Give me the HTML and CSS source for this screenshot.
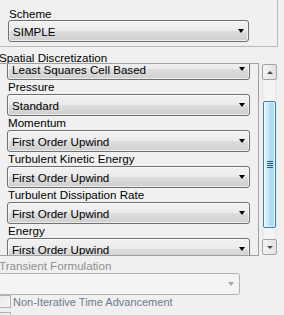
FILE: index.html
```html
<!DOCTYPE html>
<html>
<head>
<meta charset="utf-8">
<link rel="stylesheet" href="styles.css">
</head>
<body>
<div class="panel">
  <div class="group">
    <div class="label">Scheme</div>
    <div class="combo combo-scheme"><span class="value">SIMPLE</span><span class="arrow"></span></div>
  </div>

  <div class="section-title">Spatial Discretization</div>

  <div class="scroll-row">
    <div class="frame">
      <div class="content">
        <div class="combo combo-first"><span class="value">Least Squares Cell Based</span><span class="arrow"></span></div>
        <div class="label">Pressure</div>
        <div class="combo"><span class="value">Standard</span><span class="arrow"></span></div>
        <div class="label">Momentum</div>
        <div class="combo"><span class="value">First Order Upwind</span><span class="arrow"></span></div>
        <div class="label">Turbulent Kinetic Energy</div>
        <div class="combo"><span class="value">First Order Upwind</span><span class="arrow"></span></div>
        <div class="label">Turbulent Dissipation Rate</div>
        <div class="combo"><span class="value">First Order Upwind</span><span class="arrow"></span></div>
        <div class="label">Energy</div>
        <div class="combo"><span class="value">First Order Upwind</span><span class="arrow"></span></div>
      </div>
    </div>
    <div class="scrollbar">
      <div class="sb-btn"><span class="sb-up"></span></div>
      <div class="sb-track">
        <div class="thumb"><div class="grip"><i></i><i></i><i></i><i></i></div></div>
      </div>
      <div class="sb-btn"><span class="sb-down"></span></div>
    </div>
  </div>

  <div class="label label-disabled">Transient Formulation</div>
  <div class="combo-disabled"><span class="arrow arrow-disabled"></span></div>

  <div class="check"><span class="box"></span><span class="check-text">Non-Iterative Time Advancement</span></div>
  <div class="check"><span class="box"></span><span class="check-text">Frozen Flux Formulation</span></div>
</div>
</body>
</html>
```

FILE: styles.css
```css
html, body {
  margin: 0;
  padding: 0;
  width: 284px;
  height: 315px;
  overflow: hidden;
  background: #f0f0f0;
}

.panel {
  margin-left: -8px;
  width: 286px;
  font-family: "Liberation Sans", Arial, sans-serif;
  font-size: 11.6px;
  color: #000;
}

.group {
  margin-top: -10px;
  border: 1px solid #b9b9b9;
  padding: 16px 0 4px 15px;
}

.label {
  height: 14px;
  line-height: 14px;
  padding-left: 1px;
  white-space: nowrap;
}

.group .label {
  height: 13px;
  line-height: 13px;
}

.combo {
  position: relative;
  box-sizing: border-box;
  width: 243px;
  height: 22px;
  border: 1px solid #707070;
  border-radius: 3px;
  background: linear-gradient(to bottom, #f2f2f2 0%, #ebebeb 48%, #dddddd 52%, #cfcfcf 100%);
  box-shadow: inset 0 0 0 1px rgba(255,255,255,0.6);
  display: flex;
  align-items: center;
  padding-left: 4px;
  white-space: nowrap;
}

.combo-scheme {
  width: 241px;
}

.arrow {
  position: absolute;
  right: 4px;
  top: 50%;
  margin-top: -2px;
  width: 0;
  height: 0;
  border-left: 3.5px solid transparent;
  border-right: 3.5px solid transparent;
  border-top: 4px solid #000;
}

.section-title {
  padding-top: 4px;
  height: 12px;
  line-height: 13px;
  padding-left: 7px;
  white-space: nowrap;
}

.scroll-row {
  display: flex;
  align-items: stretch;
}

.frame {
  box-sizing: border-box;
  width: 267px;
  height: 193px;
  border: 1px solid #a0a0a0;
  overflow: hidden;
}

.content {
  margin-top: -6px;
  padding-left: 14px;
}

.scrollbar {
  margin-left: 3px;
  width: 15px;
  padding-top: 1px;
  display: flex;
  flex-direction: column;
  height: 191px;
}

.sb-btn {
  box-sizing: border-box;
  height: 16px;
  border: 1px solid #a3a3a3;
  border-radius: 2px;
  background: linear-gradient(to right, #f4f4f4, #e2e2e2);
  display: flex;
  align-items: center;
  justify-content: center;
}

.sb-up, .sb-down {
  width: 0;
  height: 0;
  border-left: 3px solid transparent;
  border-right: 3px solid transparent;
}

.sb-up {
  border-bottom: 3px solid #4a4a4a;
}

.sb-down {
  border-top: 3px solid #4a4a4a;
}

.sb-track {
  flex: 1;
  display: flex;
  flex-direction: column;
  align-items: center;
  background: linear-gradient(to right, #e6e6e6, #f4f4f4 20%, #f4f4f4 80%, #e6e6e6);
}

.thumb {
  box-sizing: border-box;
  margin-top: 21px;
  width: 13px;
  height: 127px;
  border: 1px solid #3c7fb1;
  border-radius: 2px;
  background: linear-gradient(to right, #e3f4fc, #c4e5f6 45%, #a9d9f3 55%, #b6def5);
  box-shadow: inset 0 0 0 1px rgba(255,255,255,0.55);
  display: flex;
  align-items: center;
  justify-content: center;
}

.grip {
  display: flex;
  flex-direction: column;
  gap: 1px;
}

.grip i {
  display: block;
  width: 6px;
  height: 1px;
  background: #2a5d86;
}

.label-disabled {
  margin-top: 3px;
  padding-left: 7px;
  color: #8f8f8f;
}

.combo-disabled {
  position: relative;
  box-sizing: border-box;
  margin-left: 6px;
  width: 242px;
  height: 22px;
  border: 1px solid #b4b4b4;
  border-radius: 3px;
  background: #f4f4f4;
}

.arrow-disabled {
  right: 5px;
  border-top-color: #a8a8a8;
}

.check {
  display: flex;
  align-items: flex-start;
  height: 17px;
  padding-left: 6px;
  white-space: nowrap;
}

.box {
  box-sizing: border-box;
  width: 13px;
  height: 13px;
  border: 1px solid #b1b1b1;
  background: linear-gradient(to bottom right, #e9e9e9, #f6f6f6);
  margin-right: 2px;
}

.check-text {
  font-size: 11px;
  line-height: 13px;
  margin-top: 1px;
  color: #6d7b8d;
}
```
